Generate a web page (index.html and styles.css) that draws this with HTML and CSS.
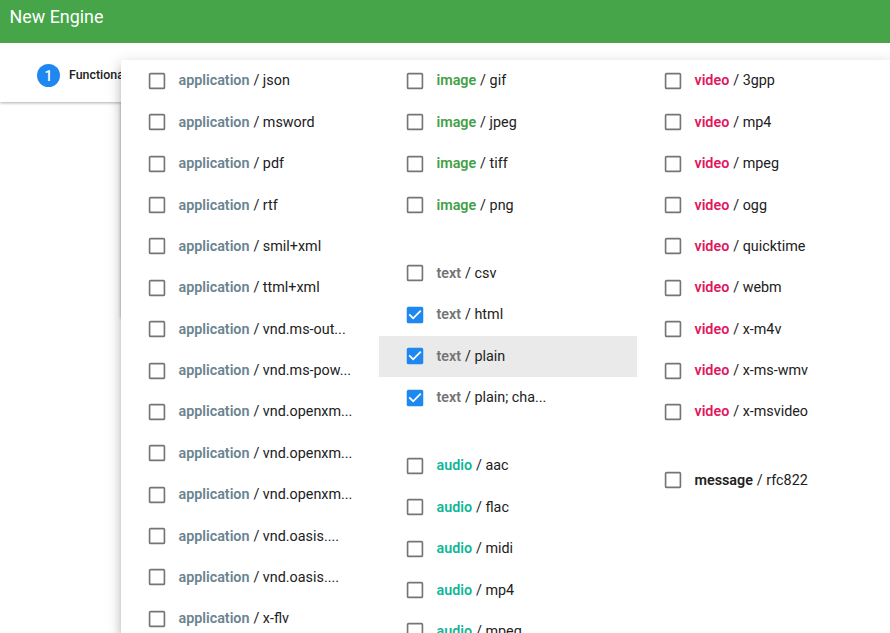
FILE: index.html
```
<!DOCTYPE html>
<html lang="en">
<head>
<meta charset="utf-8">
<title>New Engine</title>
<link rel="stylesheet" href="styles.css">
</head>
<body>
<header class="toolbar"><h1>New Engine</h1></header>
<div class="stepper"><span class="step-number">1</span><span class="step-label">Functional</span></div>
<div class="card"></div>
<main class="menu" id="menu"></main>
<script src="menu.js"></script>
</body>
</html>
```
FILE: styles.css
```
* { box-sizing: border-box; }
body {
  margin: 0;
  height: 633px;
  overflow: hidden;
  background: #fff;
  color: #212121;
  font-family: Roboto, sans-serif;
}
.toolbar {
  position: relative;
  z-index: 1;
  height: 43px;
  padding: 6px 9.5px;
  background: #45a548;
  color: #fff;
}
h1 {
  margin: 0;
  font-size: 17.9px;
  line-height: 22px;
  font-weight: 370;
}
.stepper {
  display: flex;
  align-items: center;
  height: 59px;
  padding: 6px 0 0 37px;
  box-shadow: 0 1px 3px rgba(0, 0, 0, 0.32);
}
.step-number {
  display: flex;
  align-items: center;
  justify-content: center;
  width: 23px;
  height: 23px;
  border-radius: 50%;
  background: #1e88f0;
  color: #fff;
  font-size: 14px;
  font-weight: 500;
}
.step-label {
  margin: -2px 0 0 9px;
  font-size: 12.4px;
  font-weight: 500;
}
.card {
  width: 300px;
  height: 215px;
  margin-left: 121px;
  box-shadow: 0 1px 3px rgba(0, 0, 0, 0.3);
}
.menu {
  position: absolute;
  top: 60px;
  left: 121px;
  z-index: 2;
  display: grid;
  grid-template-columns: repeat(3, 258px);
  width: 769px;
  height: 573px;
  overflow: hidden;
  padding-top: 0.3px;
  border-radius: 3px 0 0 0;
  background: #fff;
  box-shadow: 0 5px 5px -3px rgba(0, 0, 0, 0.2), 0 8px 10px 1px rgba(0, 0, 0, 0.14), 0 3px 14px 2px rgba(0, 0, 0, 0.12);
}
.group { margin-bottom: 27px; }
.row {
  display: flex;
  align-items: center;
  height: 41.38px;
  padding-left: 25px;
}
.hovered { background: #eaeaea; }
.check {
  flex: none;
  width: 22px;
  height: 22px;
  margin-right: 10.5px;
}
.box { fill: none; stroke: #757575; stroke-width: 1.8; }
.fill { fill: #1e88f0; }
.tick { fill: none; stroke: #fff; stroke-width: 2; }
.label {
  margin-top: 1px;
  font-size: 14.35px;
  line-height: 20px;
  white-space: pre;
}
.type { margin-right: 0.4px; font-weight: 600; letter-spacing: -0.02px; }
.application { color: #6a8490; }
.image { color: #43a047; }
.text { color: #757575; }
.audio { color: #0fb797; }
.video { color: #e0185b; }
```
FILE: menu.js
```
const columns = [
  [['application', ['json', 'msword', 'pdf', 'rtf', 'smil+xml', 'ttml+xml', 'vnd.ms-out...', 'vnd.ms-pow...', 'vnd.openxm...', 'vnd.openxm...', 'vnd.openxm...', 'vnd.oasis....', 'vnd.oasis....', 'x-flv']]],
  [['image', ['gif', 'jpeg', 'tiff', 'png']],
   ['text', ['csv', 'html', 'plain', 'plain; cha...']],
   ['audio', ['aac', 'flac', 'midi', 'mp4', 'mpeg']]],
  [['video', ['3gpp', 'mp4', 'mpeg', 'ogg', 'quicktime', 'webm', 'x-m4v', 'x-ms-wmv', 'x-msvideo']],
   ['message', ['rfc822']]]
];
const empty = '<rect class="box" x="3.9" y="3.9" width="16.2" height="16.2" rx="1.1"/>';
const checked = '<rect class="fill" x="3" y="3" width="18" height="18" rx="2"/><path class="tick" d="M5.7 11.3 10 15.6 18.3 7.3"/>';
const row = (type, name) => {
  const on = type === 'text' && name !== 'csv';
  const hover = type === 'text' && name === 'plain';
  return `<div class="row${hover ? ' hovered' : ''}"><svg class="check" viewBox="0 0 24 24">${on ? checked : empty}</svg><span class="label"><span class="type ${type}">${type}</span> / ${name}</span></div>`;
};
document.getElementById('menu').innerHTML = columns.map(groups =>
  `<div class="column">${groups.map(([type, names]) =>
    `<div class="group">${names.map(name => row(type, name)).join('')}</div>`).join('')}</div>`).join('');
```
